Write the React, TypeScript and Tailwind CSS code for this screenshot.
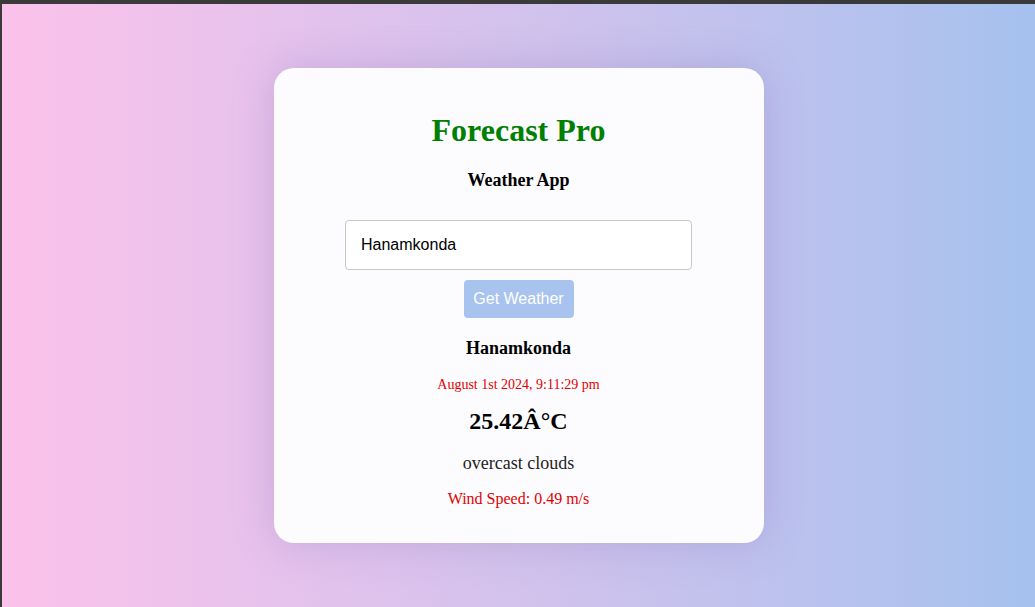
const App: React.FC = () => {
  const weather = {
    city: "Hanamkonda",
    date: "August 1st 2024, 9:11:29 pm",
    temp: "25.42Â°C",
    description: "overcast clouds",
    wind: "0.49",
  };

  return (
    <div className="h-screen w-full flex flex-col bg-[#3a3a3a] font-['Liberation_Serif',serif]">
      <div className="h-[4px] shrink-0" />
      <div className="flex flex-1 min-h-0">
        <div className="w-[2px] shrink-0" />
        <main className="flex-1 flex items-center justify-center bg-gradient-to-r from-[#fbc2eb] to-[#a6c1ee]">
          <div className="w-[490px] h-[475px] rounded-[20px] bg-[#fcfcfe] shadow-[0_0_40px_rgba(120,90,170,0.25)] flex flex-col items-center pt-[44px]">
            <h1 className="text-[32px] leading-[37px] font-bold text-[#008000]">Forecast Pro</h1>
            <h3 className="mt-[21px] text-[18px] leading-[21px] font-bold text-black">Weather App</h3>
            <input
              type="text"
              defaultValue={weather.city}
              className="mt-[29px] w-[347px] h-[50px] px-[15px] border border-[#c8c8c8] rounded-[4px] bg-white text-[16px] text-black font-['Liberation_Sans',Arial,sans-serif] outline-none"
            />
            <button className="mt-[10px] w-[110px] h-[38px] rounded-[4px] bg-[#a8c4ee] text-white text-[16px] font-['Liberation_Sans',Arial,sans-serif]">
              Get Weather
            </button>
            <h2 className="mt-[20px] text-[18px] leading-[21px] font-bold text-black">{weather.city}</h2>
            <p className="mt-[18px] text-[14px] leading-[16px] text-[#e00000]">{weather.date}</p>
            <p className="mt-[14px] text-[24px] leading-[28px] font-bold text-black">{weather.temp}</p>
            <p className="mt-[18px] text-[18px] leading-[20px] text-[#222]">{weather.description}</p>
            <p className="mt-[17px] text-[16px] leading-[18px] text-[#e00000]">Wind Speed: {weather.wind} m/s</p>
          </div>
        </main>
      </div>
    </div>
  );
};

export default App;
